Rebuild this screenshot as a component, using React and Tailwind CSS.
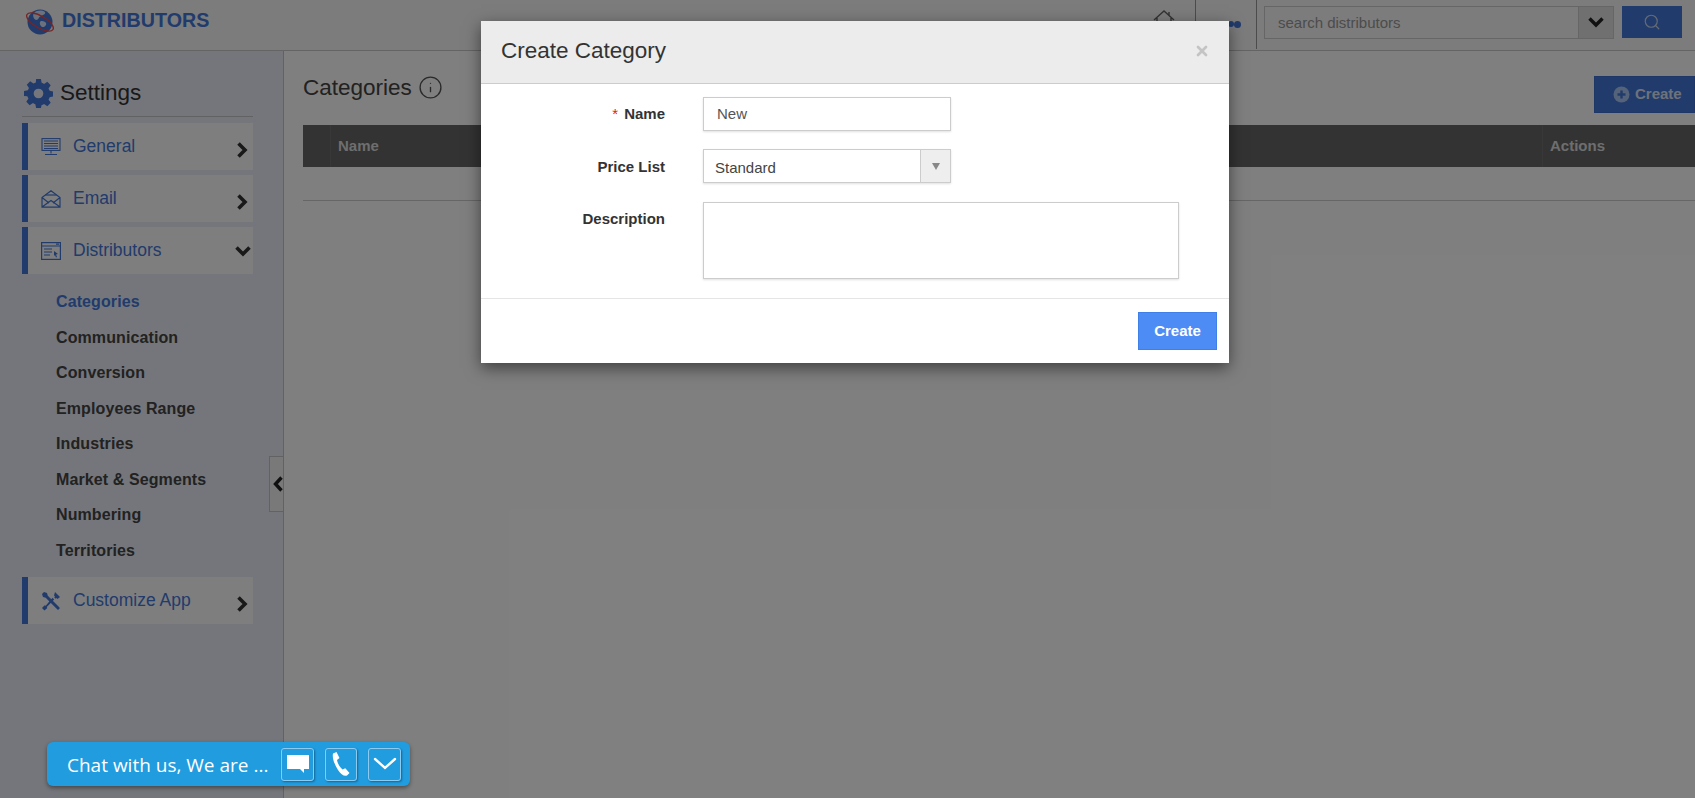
import React from "react";
import { Info, Search, X } from "lucide-react";

const font = { fontFamily: '"Liberation Sans", Arial, sans-serif' };

const subItems = ["Categories", "Communication", "Conversion", "Employees Range", "Industries", "Market & Segments", "Numbering", "Territories"];

const Logo = () => (
    <svg width="30" height="26" viewBox="0 0 30 26">
        <circle cx="15" cy="13" r="12.500" fill="#4377d8" />
        <path d="M9 4c3-3 8-3 11-1 1 2-2 3-4 4-3 1-2 4-5 4C9 10 7 7 9 4z" fill="#d8e4f8" />
        <path d="M16 12c3 0 6 1 5 4-1 2-4 3-5 1-1-1-2-4 0-5z" fill="#d8e4f8" />
        <ellipse cx="15" cy="13" rx="15" ry="6" fill="none" stroke="#f04848" strokeWidth="1.4" transform="rotate(30 15 13)" />
    </svg>
);

const Chevron = ({ dir }) => {
    if (dir === "down") {
        return (
            <svg width="16" height="11" viewBox="0 0 16 11" fill="none" stroke="#333" strokeWidth="3.6" className="mr-[2px] mt-[2px]">
                <path d="M1.500 1.500L8 8l6.500-6.500" />
            </svg>
        );
    }
    return (
        <svg width="11" height="16" viewBox="0 0 11 16" fill="none" stroke="#333" strokeWidth="3.6" className="mr-[5px] mt-[6px]">
            <path d="M1.500 1.500L8 8l-6.500 6.500" />
        </svg>
    );
};

const MonitorIcon = () => (
    <svg width="20" height="18" viewBox="0 0 20 18" fill="none" stroke="#4377d8" strokeWidth="1.1">
        <rect x="1" y="0.600" width="18" height="11.800" />
        <path d="M3 3h14M3 5.500h14M3 8h14M3 10.500h14M10 12.500v3M4 16.500h12" />
    </svg>
);

const EnvelopeIcon = () => (
    <svg width="20" height="18" viewBox="0 0 20 18" fill="none" stroke="#4377d8" strokeWidth="1.2">
        <path d="M1 7.500L10 0.800l9 6.700v9.700H1zM1 7.500l7 5.500M19 7.500l-7 5.500M1 17l9-6.500L19 17" />
        <path d="M4.500 5h11" />
    </svg>
);

const DistributorsIcon = () => (
    <svg width="20" height="18" viewBox="0 0 20 18" fill="none" stroke="#4377d8" strokeWidth="1.2">
        <rect x="0.600" y="0.600" width="18.800" height="16.800" />
        <path d="M1 4h18M3 7h8M3 10h8M3 13h6M15 2.200h3" />
        <path d="M13 9l4 3-2 .5 1 2.500-1 .5-1-2.500-1 1z" fill="#4377d8" stroke="none" />
    </svg>
);

const ToolsIcon = () => (
    <svg width="20" height="20" viewBox="0 0 20 20" fill="#4377d8">
        <path d="M1 3l2-2 3 1 .8 2.700L18.500 16.400c.8.8-1.300 2.900-2.100 2.100L4.700 6.800 2 6z" />
        <path d="M14 1l5 5-2.500 2-1-1-.8.800-1.500-1.500.8-.8-1-1z" />
        <path d="M11.500 6.800l1.700 1.700L5.800 15.900l.5 1L3.500 19.600 1 17l2.700-2.800 1 .5z" />
    </svg>
);

const NavRow = ({ icon, label, open, className }) => (
    <div className={`flex items-center h-[47px] w-[231px] bg-[#fdfdfd] border-l-[6px] border-[#4377d8] ${className || ""}`}>
        <span className="w-[45px] pl-[13px] shrink-0 flex items-center">{icon}</span>
        <span className="text-[17.500px] text-[#4377d8] flex-1">{label}</span>
        <Chevron dir={open ? "down" : "right"} />
    </div>
);

export default function App() {
    return (
        <div className="relative w-[1695px] h-[798px] overflow-hidden bg-white text-[#333]" style={font}>
            {/* top bar */}
            <header className="flex items-start h-[51px] bg-[#f8f8f8] border-b border-[#c8c8c8]">
                <div className="flex items-center pl-[25px] pt-[9px] gap-[7px] flex-1">
                    <Logo />
                    <span className="text-[19.700px] font-bold text-[#4377d8] -mt-[3px]">DISTRIBUTORS</span>
                </div>
                <div className="w-[32px] h-[24px] flex justify-center pt-[9px] mr-[15px]">
                    <svg width="22" height="16" viewBox="0 0 22 16" fill="none" stroke="#666" strokeWidth="1.4"><path d="M1 11L11 2l10 9M4 9v7M18 9v7M16 3v3" /></svg>
                </div>
                <div className="w-[62px] h-[49px] border-x border-[#999] flex justify-end items-start pt-[21px] pr-[15px]">
                    <span className="w-[6px] h-[6px] rounded-full bg-[#4377d8]" />
                    <span className="w-[7px] h-[7px] rounded-full bg-[#4377d8]" />
                </div>
                <div className="flex pt-[6px] pl-[7px] pr-[13px]">
                    <div className="flex w-[350px] h-[33px] border border-[#ccc]">
                        <span className="flex-1 pl-[13px] text-[15px] text-[#999] leading-[31px]">search distributors</span>
                        <span className="w-[35px] bg-[#e0e0e0] border-l border-[#ccc] flex items-center justify-center">
                            <svg width="16" height="11" viewBox="0 0 16 11" fill="none" stroke="#222" strokeWidth="3.400"><path d="M1.500 1.500L8 8l6.500-6.500" /></svg>
                        </span>
                    </div>
                    <div className="w-[60px] h-[32px] ml-[8px] bg-[#4377d8] flex items-center justify-center">
                        <Search size={18} strokeWidth={1.6} className="text-[#c8d4ec]" />
                    </div>
                </div>
            </header>

            <div className="flex h-[747px]">
                {/* sidebar */}
                <aside className="relative w-[284px] shrink-0 bg-[#e9ecf6] border-r border-[#c4c4c4] pl-[22px]">
                    <div className="flex items-end w-[231px] h-[66px] pb-[8px] border-b border-[#c4c4c4] gap-[7px] pl-[2px]">
                        <svg width="29" height="29" viewBox="0 0 24 24" fill="#4377d8">
                            <path fillRule="evenodd" d="M10 0h4l.6 3.200c.7.2 1.400.5 2 .9l2.700-1.800 2.800 2.800-1.800 2.700c.4.6.7 1.300.9 2l3.200.6v4l-3.200.6c-.2.7-.5 1.400-.9 2l1.800 2.700-2.800 2.800-2.700-1.800c-.6.4-1.300.7-2 .9L14 24h-4l-.6-3.200c-.7-.2-1.400-.5-2-.9l-2.700 1.800-2.800-2.800 1.800-2.700c-.4-.6-.7-1.300-.9-2L0 14v-4l3.200-.6c.2-.7.5-1.400.9-2L2.300 4.700l2.800-2.800 2.700 1.800c.6-.4 1.300-.7 2-.9zM12 8a4 4 0 1 0 0 8 4 4 0 0 0 0-8z" />
                        </svg>
                        <span className="text-[22.500px] text-[#333] leading-[30px]">Settings</span>
                    </div>
                    <div className="flex flex-col mt-[6px]">
                        <NavRow label="General" icon={<MonitorIcon />} />
                        <NavRow label="Email" className="mt-[5px] h-[46px]" icon={<EnvelopeIcon />} />
                        <NavRow label="Distributors" open className="mt-[5px]" icon={<DistributorsIcon />} />
                    </div>
                    <ul className="mt-[10px] pl-[34px]">
                        {subItems.map((s, i) => (
                            <li key={s} className={`h-[35.500px] leading-[35.500px] text-[16px] font-bold tracking-[0.1px] ${i === 0 ? "text-[#4377d8]" : "text-[#444]"}`}>{s}</li>
                        ))}
                    </ul>
                    <NavRow label="Customize App" className="mt-[9px] h-[46px]" icon={<ToolsIcon />} />
                    <div className="absolute right-0 top-[405px] w-[14px] h-[56px] border border-r-0 border-[#c4c4c4] bg-[#f2f2f2] flex items-center justify-end">
                        <svg width="10" height="16" viewBox="0 0 10 16" fill="none" stroke="#222" strokeWidth="3.400"><path d="M8.500 1.500L2.500 8l6 6.500" /></svg>
                    </div>
                </aside>

                {/* main */}
                <main className="flex-1 pl-[19px]">
                    <div className="flex items-start justify-between h-[74px]">
                        <div className="flex items-center gap-[6px] pt-[20px]">
                            <span className="text-[22.500px] text-[#444]">Categories</span>
                            <Info size={25} strokeWidth={1.3} className="text-[#555]" />
                        </div>
                        <div className="mt-[25px] w-[101px] h-[37px] bg-[#4377d8] border border-[#3f6fcc] flex items-center pl-[18px] gap-[5px] text-[15px] font-bold text-[#dce4f4]">
                            <svg width="17" height="17" viewBox="0 0 17 17"><circle cx="8.500" cy="8.500" r="8" fill="#a8c4f4" /><path d="M8.500 4.500v8M4.500 8.500h8" stroke="#4377d8" strokeWidth="2.400" /></svg>
                            Create
                        </div>
                    </div>
                    <div className="flex h-[42px] bg-[#666] text-[#ddd] text-[15px] font-bold leading-[42px]">
                        <div className="w-[28px] border-r border-[#707070]" />
                        <div className="flex-1 pl-[7px]">Name</div>
                        <div className="w-[153px] border-l border-[#707070] pl-[7px]">Actions</div>
                    </div>
                    <div className="h-[34px] border-b border-[#ccc]" />
                </main>
            </div>

            {/* backdrop */}
            <div className="absolute inset-0 bg-black/50" />

            {/* modal */}
            <div className="absolute left-[481px] top-[21px] w-[748px] h-[342px] bg-white shadow-[0_5px_15px_rgba(0,0,0,0.5)] flex flex-col">
                <div className="h-[63px] shrink-0 bg-[#ececec] border-b border-[#ccc] flex items-center justify-between pl-[20px] pr-[19px]">
                    <h3 className="text-[22.500px] text-[#333] -mt-[3px]">Create Category</h3>
                    <X size={16} strokeWidth={4} className="text-[#c4c4c4] -mt-[3px]" />
                </div>
                <div className="h-[214px] shrink-0 pt-[13px] text-[15px]">
                    <div className="flex items-center">
                        <label className="w-[184px] text-right font-bold text-[#333]"><span className="text-[#e02020] font-normal mr-[6px]">*</span>Name</label>
                        <div className="ml-[38px] w-[248px] h-[34px] border border-[#ccc] shadow-[0_1px_2px_rgba(0,0,0,0.12)] pl-[13px] leading-[32px] text-[#555]">New</div>
                    </div>
                    <div className="flex items-center mt-[18px]">
                        <label className="w-[184px] text-right font-bold text-[#333] pt-[2px]">Price List</label>
                        <div className="ml-[38px] w-[248px] h-[34px] border border-[#ccc] shadow-[0_1px_2px_rgba(0,0,0,0.12)] flex">
                            <span className="flex-1 pl-[11px] leading-[35px] text-[#444]">Standard</span>
                            <span className="w-[30px] border-l border-[#ccc] bg-[#eee] flex items-center justify-center">
                                <span className="w-0 h-0 border-x-[4px] border-x-transparent border-t-[7px] border-t-[#888]" />
                            </span>
                        </div>
                    </div>
                    <div className="flex items-start mt-[19px]">
                        <label className="w-[184px] text-right font-bold text-[#333] pt-[6px]">Description</label>
                        <div className="ml-[38px] w-[476px] h-[77px] border border-[#ccc] shadow-[0_1px_2px_rgba(0,0,0,0.12)]" />
                    </div>
                </div>
                <div className="flex-1 border-t border-[#e5e5e5] flex justify-end pt-[13px] pr-[12px]">
                    <button className="w-[79px] h-[38px] bg-[#4d8cf5] border border-[#3f7fe8] text-white text-[15px] font-bold">Create</button>
                </div>
            </div>

            {/* chat widget */}
            <div className="absolute left-[47px] top-[742px] w-[363px] h-[44px] rounded-[6px] bg-[#209cdf] shadow-[0_2px_4px_rgba(0,0,0,0.4)] flex items-center pl-[20px] text-white" style={{ fontFamily: '"Open Sans", sans-serif' }}>
                <span className="text-[19px] w-[214px] whitespace-nowrap mt-[3px]">Chat with us, We are ...</span>
                <div className="w-[33px] h-[33px] rounded-[3px] border border-[#8ccbef] shadow-[1px_1px_2px_rgba(0,0,0,0.35)] flex items-center justify-center">
                    <svg width="24" height="20" viewBox="0 0 24 20" fill="white"><path d="M1 1h22v14h-5v4l-4-4H1z" /></svg>
                </div>
                <div className="w-[32px] h-[33px] ml-[11px] rounded-[3px] border border-[#8ccbef] shadow-[1px_1px_2px_rgba(0,0,0,0.35)] flex items-center justify-center">
                    <svg width="20" height="26" viewBox="0 0 20 26" fill="white">
                        <path d="M2 2.500L5.500 1l3 6-2.500 2c.5 3 2.500 7 5.500 9.500l2.800-1.200L18.500 22 16 24.500c-3 1-6-1-9-5.500C3.500 13.500 1 7 2 2.500z" />
                    </svg>
                </div>
                <div className="w-[33px] h-[33px] ml-[11px] rounded-[3px] border border-[#8ccbef] shadow-[1px_1px_2px_rgba(0,0,0,0.35)] flex items-center justify-center">
                    <svg width="24" height="14" viewBox="0 0 24 14" fill="none" stroke="white" strokeWidth="2.400" strokeLinecap="round"><path d="M2 2l10 9 10-9" /></svg>
                </div>
            </div>
        </div>
    );
}
